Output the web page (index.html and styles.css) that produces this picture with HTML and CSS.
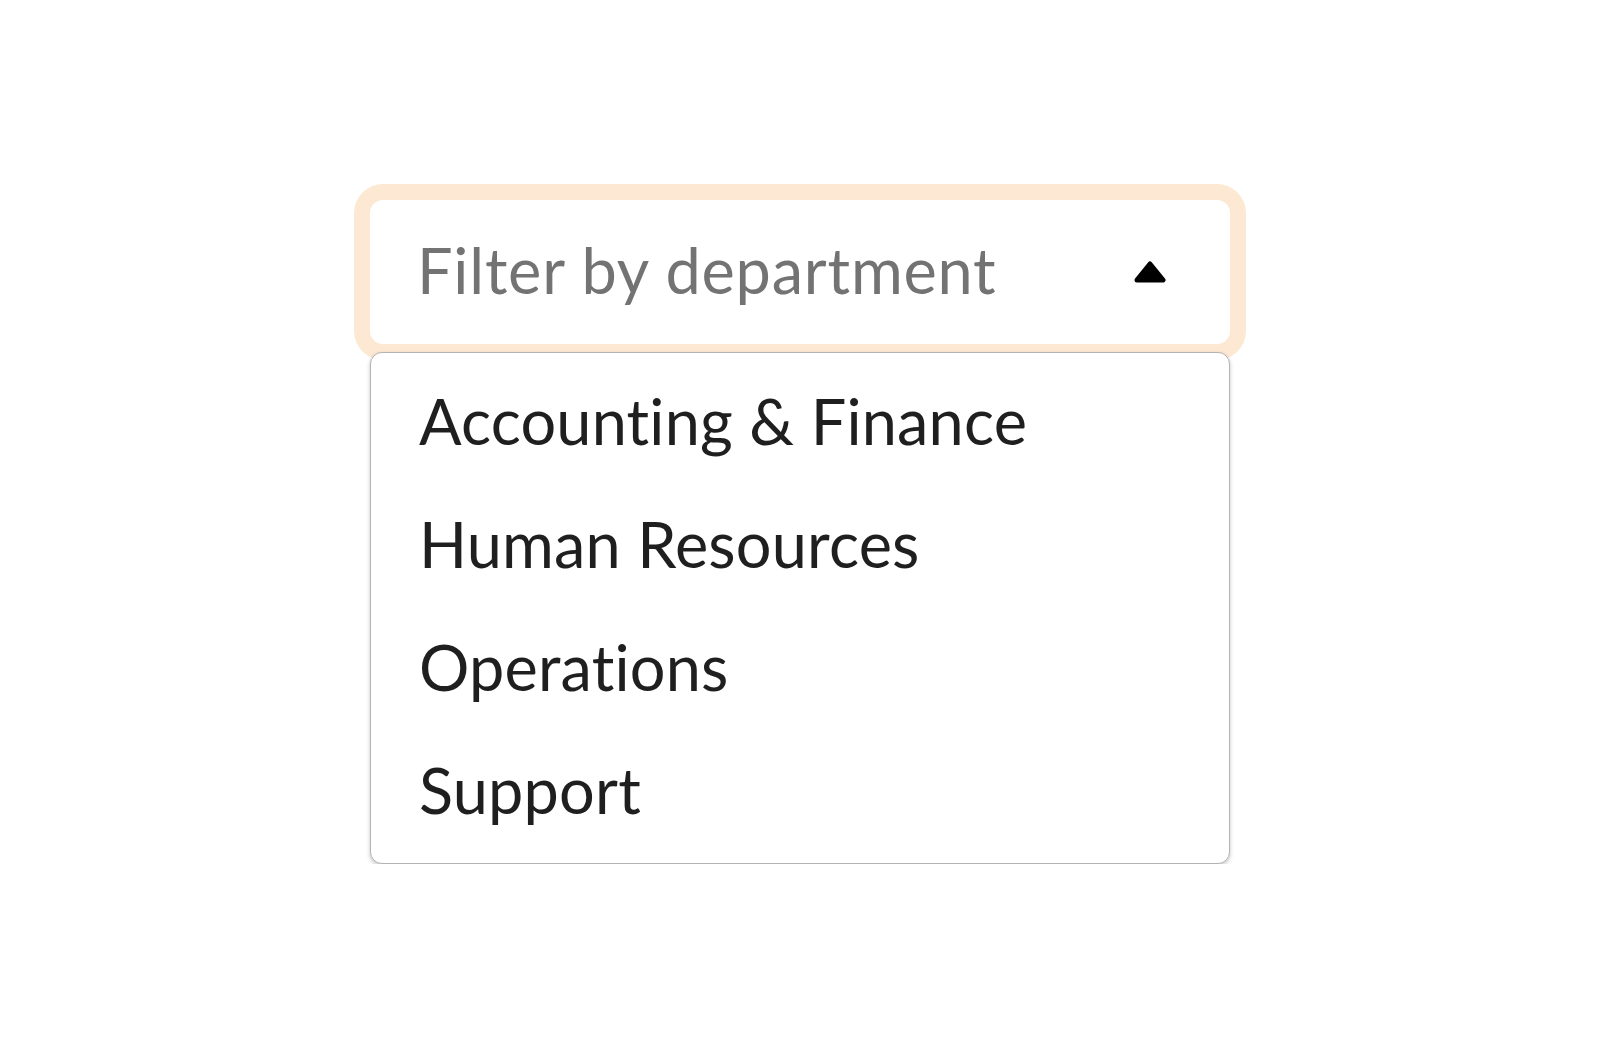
FILE: index.html
```html
<!DOCTYPE html>
<html lang="en">
<head>
  <meta charset="UTF-8" />
  <title>Filter by department</title>
  <link rel="stylesheet" href="styles.css">
</head>
<body>
  <div class="filter">
    <button class="select" type="button">
      <span class="select-label">Filter by department</span>
      <svg class="select-caret" width="32" height="22" viewBox="0 0 32 22">
        <polygon points="16,3 29,19 3,19" />
      </svg>
    </button>
    <ul class="options">
      <li>Accounting &amp; Finance</li>
      <li>Human Resources</li>
      <li>Operations</li>
      <li>Support</li>
    </ul>
  </div>
</body>
</html>
```

FILE: styles.css
```css
:root {
  --ring: #fde9d3;
  --text: #1f1f1f;
  --muted: #737373;
  --line: #b3b3b3;
}

body {
  margin: 0;
  background: #fff;
  font-family: 'Lato', sans-serif;
  font-variant-ligatures: none;
}

.filter {
  width: 860px;
  margin: 200px auto 0;
}

.select {
  width: 100%;
  height: 144px;
  display: flex;
  align-items: center;
  justify-content: space-between;
  padding: 0 64px 0 47px;
  background: #fff;
  border: none;
  border-radius: 13px;
  box-shadow: 0 0 0 16px var(--ring);
  font: inherit;
  cursor: pointer;
}

.select-label {
  font-size: 63px;
  letter-spacing: 0.8px;
  color: var(--muted);
  margin-bottom: 6px;
}

.select-caret polygon {
  fill: #000;
  stroke: #000;
  stroke-width: 5;
  stroke-linejoin: round;
}

.options {
  list-style: none;
  margin: 8px 0 0;
  padding: 9px 0;
  border: 1px solid var(--line);
  border-radius: 12px;
  box-shadow: 0 2px 4px rgba(0, 0, 0, 0.22);
  background: #fff;
}

.options li {
  box-sizing: border-box;
  height: 123px;
  display: flex;
  align-items: center;
  padding: 0 0 6px 48px;
  font-size: 63px;
  letter-spacing: 0.2px;
  color: var(--text);
}
```
